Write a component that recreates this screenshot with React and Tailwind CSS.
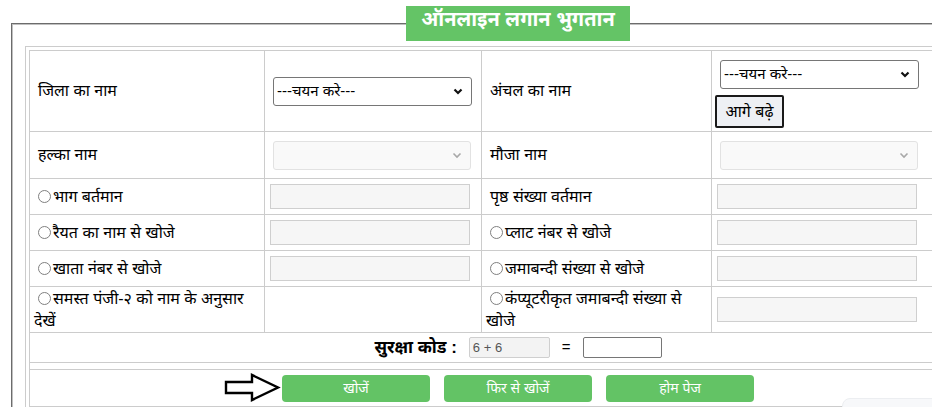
import React from 'react';

const Chevron = ({ disabled }) => (
    <svg width="10" height="7" viewBox="0 0 10 7" className="shrink-0">
        <path
            d="M1.5 1.5 L5 5 L8.5 1.5"
            fill="none"
            stroke={disabled ? '#a8a8a8' : '#111111'}
            strokeWidth={disabled ? 1.6 : 2.2}
        />
    </svg>
);

const FakeSelect = ({ text, disabled, className = '' }) => (
    <div
        className={`h-[29px] flex items-center justify-between pl-[3px] pr-[8px] rounded-[3px] border ${
            disabled ? 'bg-[#f9f9f9] border-[#e2e2e2]' : 'bg-white border-[#767676]'
        } ${className}`}
    >
        <span className="text-[15px] text-black">{text}</span>
        <Chevron disabled={disabled} />
    </div>
);

const TextBox = ({ className = '' }) => (
    <div className={`h-[25px] w-[200px] bg-[#f6f6f6] border border-[#cfcfcf] ${className}`} />
);

const Radio = () => (
    <span className="inline-block w-[13px] h-[13px] rounded-full border border-[#808080] bg-white mr-[2px] align-[-1px]" />
);

const Label = ({ children, radio }) => (
    <div className="pl-[4px] indent-[4px] pr-2 text-[16px] leading-[22px] text-black">
        {radio && <Radio />}
        {children}
    </div>
);

const cell = 'border-r border-b border-[#cccccc] flex items-center';

const App = () => {
    return (
        <div className="relative w-[932px] h-[407px] overflow-hidden bg-white font-['Liberation_Sans','Noto_Sans_Devanagari',sans-serif]">
            <div className="pt-[6px] pl-[11px]">
                <fieldset className="w-[1013px] border-2 [border-style:groove] border-[#c0c0c0] pl-[12px] pr-[12px] pt-[5px] pb-3">
                    <legend className="mx-auto bg-[#64c466] h-[35px] px-[15px] text-white font-bold text-[20px] leading-[27px]">
                        ऑनलाइन लगान भुगतान
                    </legend>

                    {/* outer table frame */}
                    <div className="border border-[#cccccc] p-[3px]">
                        <div className="border-l border-t border-[#cccccc]">
                            <div className="grid grid-cols-[235px_217px_230px_295px] grid-rows-[81px_47px_36px_36px_36px_46px_30px]">
                                {/* row 1 */}
                                <div className={cell}>
                                    <Label>जिला का नाम</Label>
                                </div>
                                <div className={`${cell} pl-[8px]`}>
                                    <FakeSelect text="---चयन करे---" className="w-[199px]" />
                                </div>
                                <div className={cell}>
                                    <Label>अंचल का नाम</Label>
                                </div>
                                <div className="border-r border-b border-[#cccccc] flex flex-col items-start pt-[9px]">
                                    <FakeSelect text="---चयन करे---" className="w-[199px] ml-[8px]" />
                                    <button className="ml-[3px] mt-[6px] h-[33px] w-[69px] border-2 border-[#1a1a1a] rounded-[2px] bg-[#eef0f4] text-[16px] text-black">
                                        आगे बढ़े
                                    </button>
                                </div>

                                {/* row 2 */}
                                <div className={cell}>
                                    <Label>हल्का नाम</Label>
                                </div>
                                <div className={`${cell} pl-[8px]`}>
                                    <FakeSelect disabled text="" className="w-[198px]" />
                                </div>
                                <div className={cell}>
                                    <Label>मौजा नाम</Label>
                                </div>
                                <div className={`${cell} pl-[8px]`}>
                                    <FakeSelect disabled text="" className="w-[198px]" />
                                </div>

                                {/* row 3 */}
                                <div className={cell}>
                                    <Label radio>भाग बर्तमान</Label>
                                </div>
                                <div className={`${cell} pl-[5px]`}>
                                    <TextBox />
                                </div>
                                <div className={cell}>
                                    <Label>पृष्ठ संख्या वर्तमान</Label>
                                </div>
                                <div className={`${cell} pl-[5px]`}>
                                    <TextBox />
                                </div>

                                {/* row 4 */}
                                <div className={cell}>
                                    <Label radio>रैयत का नाम से खोजे</Label>
                                </div>
                                <div className={`${cell} pl-[5px]`}>
                                    <TextBox />
                                </div>
                                <div className={cell}>
                                    <Label radio>प्लाट नंबर से खोजे</Label>
                                </div>
                                <div className={`${cell} pl-[5px]`}>
                                    <TextBox />
                                </div>

                                {/* row 5 */}
                                <div className={cell}>
                                    <Label radio>खाता नंबर से खोजे</Label>
                                </div>
                                <div className={`${cell} pl-[5px]`}>
                                    <TextBox />
                                </div>
                                <div className={cell}>
                                    <Label radio>जमाबन्दी संख्या से खोजे</Label>
                                </div>
                                <div className={`${cell} pl-[5px]`}>
                                    <TextBox />
                                </div>

                                {/* row 6 */}
                                <div className={cell}>
                                    <Label radio>समस्त पंजी-२ को नाम के अनुसार देखें</Label>
                                </div>
                                <div className={cell} />
                                <div className={cell}>
                                    <Label radio>कंप्यूटरीकृत जमाबन्दी संख्या से खोजे</Label>
                                </div>
                                <div className={`${cell} pl-[5px]`}>
                                    <TextBox />
                                </div>

                                {/* captcha row */}
                                <div className={`${cell} col-span-4 justify-center gap-3`}>
                                    <span className="text-[17px] font-bold text-black">सुरक्षा कोड :</span>
                                    <div className="h-[21px] w-[81px] bg-[#f3f3f3] border border-[#cfcfcf] rounded-[2px] flex items-center pl-[3px] text-[13px] text-[#555555]">
                                        6 + 6
                                    </div>
                                    <span className="text-[15px] text-black">=</span>
                                    <div className="h-[21px] w-[79px] bg-white border border-[#767676] rounded-[2px]" />
                                </div>
                            </div>

                            <div className="h-[6px] border-r border-[#cccccc]" />

                            {/* buttons row */}
                            <div className="h-[38px] border-t border-b border-r border-[#cccccc] flex items-center justify-center gap-[14px]">
                                <div className="relative">
                                    <svg
                                        width="58"
                                        height="29"
                                        viewBox="0 0 58 29"
                                        className="absolute right-full top-[-2px] mr-[1px]"
                                    >
                                        <path
                                            d="M3 9 H29 V2 L55 14.5 L29 27 V20 H3 Z"
                                            fill="white"
                                            stroke="black"
                                            strokeWidth="2.4"
                                            strokeLinejoin="miter"
                                        />
                                    </svg>
                                    <button className="h-[27px] w-[148px] rounded-[4px] bg-[#63c365] text-white text-[14px]">
                                        खोजें
                                    </button>
                                </div>
                                <button className="h-[27px] w-[148px] rounded-[4px] bg-[#63c365] text-white text-[14px]">
                                    फिर से खोजें
                                </button>
                                <button className="h-[27px] w-[148px] rounded-[4px] bg-[#63c365] text-white text-[14px]">
                                    होम पेज
                                </button>
                            </div>
                        </div>
                    </div>
                </fieldset>
            </div>

            {/* floating widget peeking in the corner */}
            <div className="absolute left-[842px] top-[398px] w-[120px] h-[30px] rounded-[8px] bg-[#f7f8fa] border border-[#eceef1]" />
        </div>
    );
};

export default App;
